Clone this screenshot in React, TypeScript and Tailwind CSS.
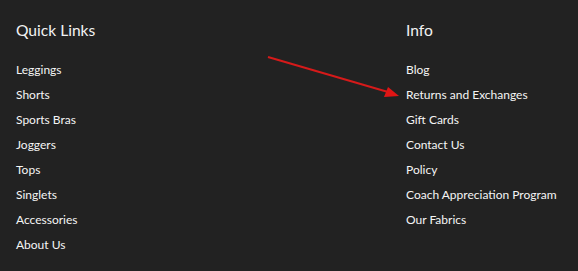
const quickLinks = ['Leggings', 'Shorts', 'Sports Bras', 'Joggers', 'Tops', 'Singlets', 'Accessories', 'About Us'];
const infoLinks = ['Blog', 'Returns and Exchanges', 'Gift Cards', 'Contact Us', 'Policy', 'Coach Appreciation Program', 'Our Fabrics'];

function Column({ title, links }: { title: string; links: string[] }) {
  return (
    <div className="flex flex-col">
      <h3 className="text-[15.6px] leading-[20px] text-[#f2f2f2] mb-[17px]">{title}</h3>
      <ul className="flex flex-col">
        {links.map((l) => (
          <li key={l} className="text-[12px] leading-[25px] text-[#f5f5f5]">
            <a href="#">{l}</a>
          </li>
        ))}
      </ul>
    </div>
  );
}

export default function App() {
  return (
    <footer
      className="relative w-[578px] h-[271px] bg-[#222222] overflow-hidden"
      style={{ fontFamily: 'Lato, "Open Sans", sans-serif' }}
    >
      <div className="grid grid-cols-[390px_1fr] pl-4 pt-[20px]">
        <Column title="Quick Links" links={quickLinks} />
        <Column title="Info" links={infoLinks} />
      </div>
      <svg className="absolute left-0 top-0" width="578" height="271" viewBox="0 0 578 271">
        <line x1="268" y1="57" x2="388" y2="92" stroke="#d61a1a" strokeWidth="2" />
        <polygon points="399,96 384,97 388,87" fill="#e01515" />
      </svg>
    </footer>
  );
}
